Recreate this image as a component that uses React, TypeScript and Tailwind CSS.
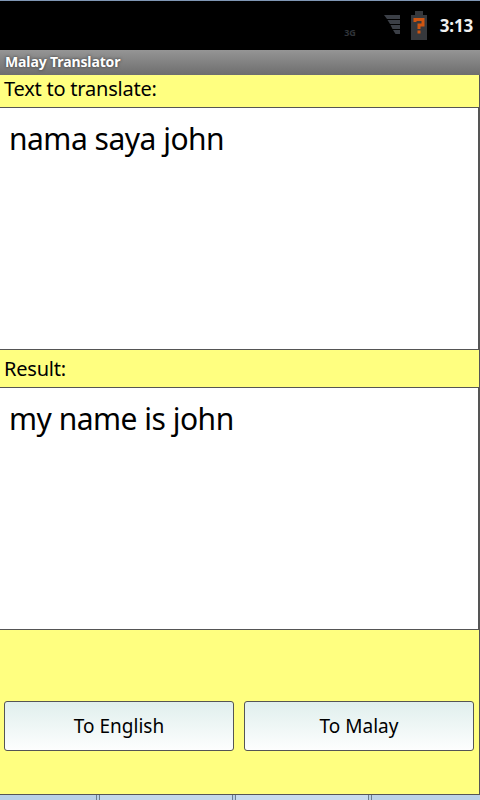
const font = { fontFamily: '"Noto Sans", sans-serif' }

function Label({ text }: { text: string }) {
  return <div className="h-[32px] pl-1 text-[20px] leading-[28px] tracking-[-0.22px] text-black">{text}</div>
}

function TextBox({ text }: { text: string }) {
  return (
    <div className="-mr-px h-[243px] border-y border-r-2 border-[#555] bg-white px-[9px] pt-[10px] text-[30px] leading-[42px] tracking-[-0.5px] text-black">
      {text}
    </div>
  )
}

function ActionButton({ label }: { label: string }) {
  return (
    <button className="h-[50px] w-[230px] rounded-[3px] border border-[#555] bg-[linear-gradient(180deg,#e0efed,#fdfefe)] text-[19px] text-black">
      {label}
    </button>
  )
}

export default function App() {
  return (
    <div className="flex h-[800px] w-[480px] flex-col overflow-hidden bg-[#ffff80]" style={font}>
      {/* Status bar */}
      <div className="flex h-[50px] items-center justify-end border-t border-[#7f96b4] bg-black">
        <span className="mt-[14px] mr-[28px] text-[9px] font-bold text-[#2f3338]">3G</span>
        <svg width="16" height="19" viewBox="0 0 16 19" className="mr-[11px] mb-[3px]" fill="#3b3f46">
          <path d="M0 0h16v4H3zM3.500 5H16v4H6zM6.500 10H16v4H8.500zM9 15h7v4h-4.500z" />
        </svg>
        <svg width="16" height="29" viewBox="0 0 16 29" className="mr-[13px] mb-[1px]">
          <path d="M4 0h8v4h4v25H0V4h4z" fill="#36383c" />
          <path d="M4 11V8.500h8V14H8v4" fill="none" stroke="#cf5510" strokeWidth="3" />
          <path d="M6.500 19.500h3v3h-3z" fill="#cf5510" />
        </svg>
        <span className="mr-[7px] text-[17px] leading-none font-bold tracking-[-0.2px] text-[#f0f0f0]">3:13</span>
      </div>

      {/* Title bar */}
      <div className="h-[25px] bg-gradient-to-b from-[#959595] to-[#6e6e6e] pl-[5px] text-[14px] leading-[24px] font-bold tracking-[-0.12px] text-white [text-shadow:0_0_3px_#333]">
        Malay Translator
      </div>

      <div className="flex flex-1 flex-col border-r border-[#555]">
        <Label text="Text to translate:" />
        <TextBox text="nama saya john" />
        <div className="h-[37px] pl-1 text-[20px] leading-[38px] tracking-[-0.22px] text-black">Result:</div>
        <TextBox text="my name is john" />

        {/* Buttons */}
        <div className="flex flex-1 items-end gap-[10px] px-1 pb-[43px]">
          <ActionButton label="To English" />
          <ActionButton label="To Malay" />
        </div>
      </div>

      {/* Tabs peeking in at the bottom */}
      <div className="flex h-[6px] border-t border-[#555] bg-[#b9d0e6]">
        <div className="w-[97px] border-r border-[#6b7c8f]" />
        <div className="ml-[2px] w-[134px] border-x border-[#6b7c8f] bg-[#c3d7ea]" />
        <div className="ml-[2px] w-[134px] border-x border-[#6b7c8f] bg-[#c8dbed]" />
        <div className="ml-[2px] flex-1 border-l border-[#6b7c8f] bg-[#bcd2e7]" />
      </div>
    </div>
  )
}
